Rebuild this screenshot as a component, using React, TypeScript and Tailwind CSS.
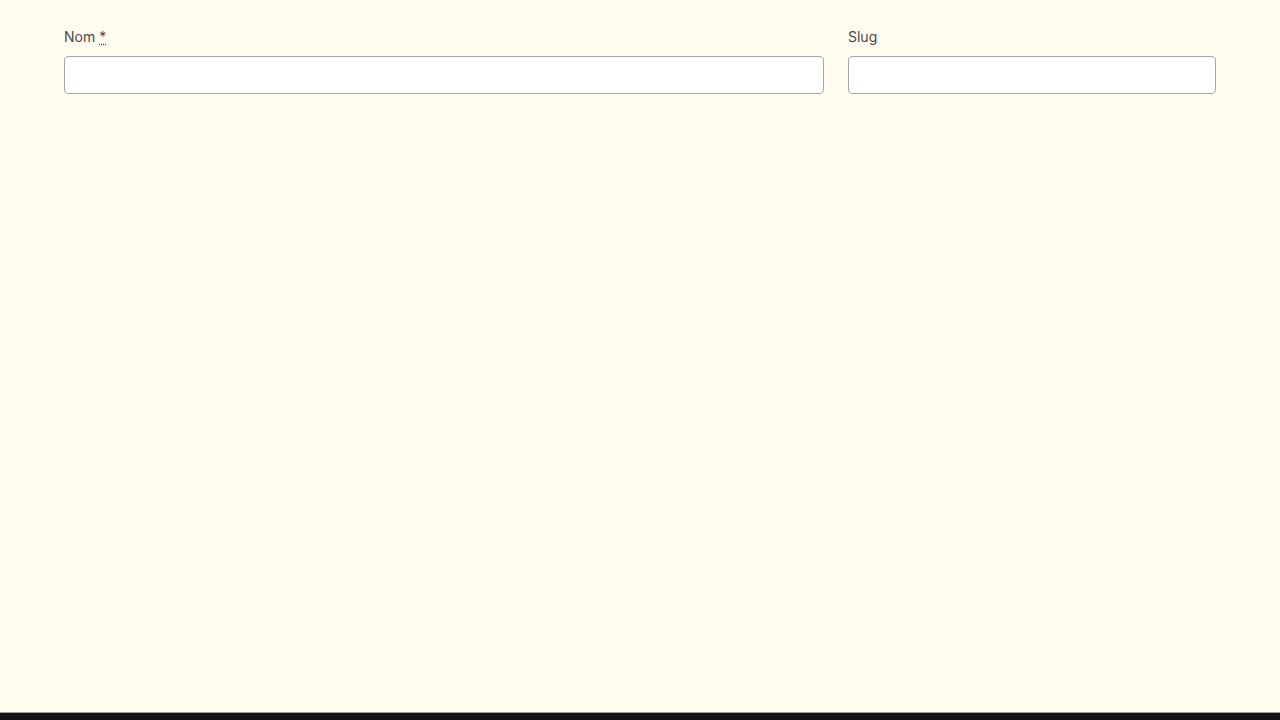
import React from "react";

export default function App() {
  return (
    <div className="min-h-screen flex flex-col bg-[#fffcef] font-['Inter',sans-serif]">
      <main className="h-[712px] px-16 pt-[28px]">
        <div className="flex gap-6">
          {/* Nom */}
          <div className="w-[760px] flex flex-col">
            <label htmlFor="nom" className="text-[14px] leading-[18px] text-[#4a4a44] mb-[10px]">
              Nom{" "}
              <abbr title="requis" className="underline decoration-dotted underline-offset-2">
                *
              </abbr>
            </label>
            <input
              id="nom"
              type="text"
              className="h-[38px] w-full rounded-[4px] border border-[#a9a8a2] bg-white px-3 text-sm outline-none"
            />
          </div>

          {/* Slug */}
          <div className="w-[368px] flex flex-col">
            <label htmlFor="slug" className="text-[14px] leading-[18px] text-[#4a4a44] mb-[10px]">
              Slug
            </label>
            <input
              id="slug"
              type="text"
              className="h-[38px] w-full rounded-[4px] border border-[#a9a8a2] bg-white px-3 text-sm outline-none"
            />
          </div>
        </div>
      </main>
      <div className="h-px bg-[#9c9b96]" />
      <footer className="h-[7px] bg-[#121212]" />
    </div>
  );
}
